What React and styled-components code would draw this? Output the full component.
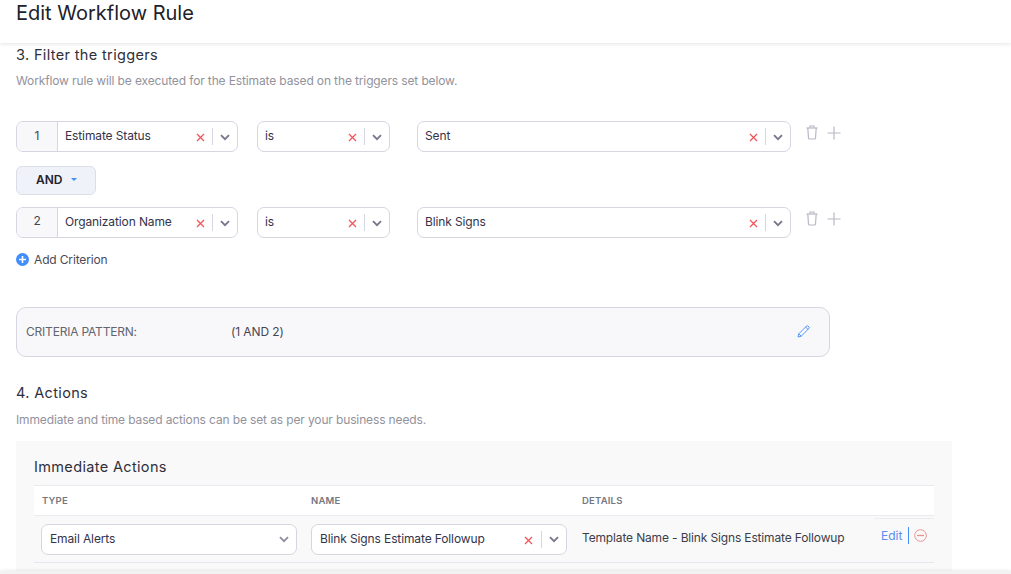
import React from 'react';
import styled, { createGlobalStyle } from 'styled-components';

const GlobalStyle = createGlobalStyle`
  html, body {
    margin: 0;
    padding: 0;
    background: #fff;
    overflow: hidden;
  }
  body {
    font-family: Inter, "Noto Sans", sans-serif;
    color: #22212e;
  }
`;

const Page = styled.div`
  position: relative;
  width: 1011px;
  height: 574px;
  overflow: hidden;
`;

const Header = styled.header`
  height: 43px;
  box-sizing: border-box;
  padding: 1px 16px 0;
  box-shadow: 0 1px 4px rgba(30, 30, 50, 0.12);
  font-size: 20px;
  line-height: 24px;
  color: #21212b;
`;

const Content = styled.main`
  padding: 0 16px;
`;

const SectionTitle = styled.h2`
  margin: 0;
  padding-top: ${({ $top }) => $top}px;
  font-size: 14.5px;
  line-height: 20px;
  font-weight: 400;
  letter-spacing: 0.35px;
  color: #2f2f3b;
`;

const SectionHint = styled.p`
  margin: ${({ $gap }) => $gap || 8}px 0 0;
  font-size: 12px;
  line-height: 16px;
  letter-spacing: -0.13px;
  color: #92929c;
`;

const CriteriaRow = styled.div`
  display: flex;
  align-items: flex-start;
  height: 31px;
  margin-top: ${({ $top }) => $top}px;
`;

const Select = styled.div`
  display: flex;
  align-items: center;
  box-sizing: border-box;
  flex: none;
  width: ${({ $width }) => $width}px;
  height: 31px;
  margin-left: ${({ $left }) => $left || 0}px;
  background: #fff;
  border: 1px solid #d6d5e2;
  border-radius: 7px;
  font-size: 12px;
  letter-spacing: -0.12px;
`;

const IndexCell = styled.span`
  flex: none;
  width: 41px;
  height: 100%;
  display: flex;
  align-items: center;
  justify-content: center;
  padding-bottom: ${({ $lift }) => $lift}px;
  box-sizing: border-box;
  background: #f8f8fb;
  border-right: 1px solid #d6d5e2;
  border-radius: 6px 0 0 6px;
  color: #45454f;
`;

const Value = styled.span`
  flex: 1;
  min-width: 0;
  padding-left: ${({ $pad }) => $pad || 7}px;
  padding-bottom: 2px;
  white-space: nowrap;
  color: #34334a;
`;

const Clear = styled.svg`
  flex: none;
  width: 9px;
  height: 9px;
  margin-top: 2px;
  margin-right: ${({ $right }) => $right || 7}px;
`;

const Divider = styled.span`
  flex: none;
  width: 1px;
  height: 17px;
  background: #d6d5e2;
`;

const Caret = styled.svg`
  flex: none;
  width: 10px;
  height: 7px;
  margin: 1px 7px 0 7px;
`;

const RowTools = styled.div`
  display: flex;
  align-items: center;
  gap: 9px;
  margin: 4px 0 0 15px;
`;

const AndButton = styled.button`
  display: flex;
  align-items: center;
  box-sizing: border-box;
  width: 80px;
  height: 29px;
  margin-top: 14px;
  padding: 0 0 2px 19px;
  background: #eff2f9;
  border: 1px solid #dcdde8;
  border-radius: 6px;
  font: 600 12px Inter, sans-serif;
  color: #22222e;
`;

const AndCaret = styled.span`
  width: 0;
  height: 0;
  margin-left: 8px;
  border-left: 3px solid transparent;
  border-right: 3px solid transparent;
  border-top: 3px solid #408dfb;
`;

const AddCriterion = styled.div`
  display: flex;
  align-items: center;
  gap: 5px;
  margin-top: 13px;
  height: 16px;
  font-size: 12px;
  letter-spacing: -0.15px;
  color: #4a4a56;
`;

const PatternBox = styled.div`
  display: flex;
  align-items: center;
  box-sizing: border-box;
  width: 814px;
  height: 50px;
  margin-top: 40px;
  padding: 0 19px 2px 9px;
  background: #f8f8fa;
  border: 1px solid #d6d5e2;
  border-radius: 10px;
  font-size: 12px;
  letter-spacing: -0.1px;
  color: #474753;
`;

const PatternLabel = styled.span`
  width: 205px;
  letter-spacing: -0.2px;
  color: #64646e;
`;

const PatternValue = styled.span`
  flex: 1;
`;

const ActionsPanel = styled.section`
  box-sizing: border-box;
  width: 936px;
  height: 140px;
  margin-top: 13px;
  padding: 17px 18px 0;
  background: #f9f9f9;
`;

const PanelTitle = styled.h3`
  margin: 0;
  font-size: 14.5px;
  line-height: 18px;
  font-weight: 400;
  letter-spacing: 0.35px;
  color: #2f2f3b;
`;

const TableHead = styled.div`
  display: grid;
  grid-template-columns: 277px 271px 1fr;
  align-items: center;
  box-sizing: border-box;
  height: 31px;
  margin-top: 9px;
  background: #fff;
  border-top: 1px solid #ebebf1;
  border-bottom: 1px solid #ebebf1;
  font-size: 9.5px;
  font-weight: 600;
  letter-spacing: 0.2px;
  color: #76767f;
`;

const HeadCell = styled.span`
  padding-left: ${({ $pad }) => $pad}px;
`;

const TableRow = styled.div`
  display: flex;
  align-items: center;
  box-sizing: border-box;
  height: 47px;
  border-bottom: 1px solid #e6e6f0;
  padding-left: 7px;
`;

const SelectSlot = styled.div`
  flex: none;
  width: ${({ $width }) => $width}px;
  letter-spacing: -0.17px;
`;

const Details = styled.span`
  flex: none;
  width: 299px;
  padding-bottom: 3px;
  font-size: 12px;
  letter-spacing: -0.15px;
  white-space: nowrap;
  color: #3d3d49;
`;

const RowActions = styled.div`
  position: relative;
  flex: 1;
  align-self: stretch;
  display: flex;
  align-items: center;
  padding: 0 0 8px 0;
  font-size: 12px;
  color: #5b8def;

  &::before {
    content: '';
    position: absolute;
    top: 2px;
    left: -7px;
    right: 0;
    height: 1px;
    background: #ebebf1;
  }
`;

const Pipe = styled.span`
  width: 1px;
  height: 17px;
  margin: 0 5px 0 6px;
  background: #408dfb;
`;

const FooterEdge = styled.div`
  position: absolute;
  left: 0;
  right: 0;
  bottom: 0;
  height: 3px;
  background: #f2f2f3;
  box-shadow: 0 -1px 3px rgba(30, 30, 50, 0.08);
`;

const ClearIcon = ({ right }) => (
  <Clear viewBox="0 0 9 9" $right={right}>
    <path d="M1 1l7 7M8 1L1 8" stroke="#f2545b" strokeWidth="1.3" fill="none" />
  </Clear>
);

const CaretIcon = ({ color = '#77768a' }) => (
  <Caret viewBox="0 0 10 7">
    <path d="M1 1.2l4 4 4-4" stroke={color} strokeWidth="1.8" fill="none" />
  </Caret>
);

const TrashIcon = () => (
  <svg width="12" height="15" viewBox="0 0 12 15" fill="none" stroke="#b9b8c6" strokeWidth="1.2">
    <path d="M.5 3h11" />
    <path d="M4 2.8V1h4v1.8" />
    <path d="M1.8 3l.7 10a1 1 0 0 0 1 1h5a1 1 0 0 0 1-1l.7-10" />
  </svg>
);

const PlusIcon = () => (
  <svg width="14" height="14" viewBox="0 0 14 14" stroke="#b9b8c6" strokeWidth="1.2">
    <path d="M7 0.5v13M.5 7h13" />
  </svg>
);

const AddIcon = () => (
  <svg width="13" height="13" viewBox="0 0 13 13">
    <circle cx="6.5" cy="6.5" r="6.5" fill="#408dfb" />
    <path d="M6.5 3v7M3 6.5h7" stroke="#fff" strokeWidth="1.6" />
  </svg>
);

const PencilIcon = () => (
  <svg width="13" height="13" viewBox="0 0 13 13" fill="none" stroke="#408dfb" strokeWidth="0.9">
    <path d="M1 12l.8-3.2L9.6 1a1 1 0 0 1 1.4 0l1 1a1 1 0 0 1 0 1.4L4.2 11.2z" />
    <path d="M1.8 8.8l2.4 2.4M8.6 2l2.4 2.4" />
  </svg>
);

const RemoveIcon = () => (
  <svg width="13" height="13" viewBox="0 0 13 13" fill="none" stroke="#ee8f8f" strokeWidth="1">
    <circle cx="6.5" cy="6.5" r="5.8" />
    <path d="M3 6.5h7" strokeWidth="1.3" />
  </svg>
);

const Criterion = ({ index, field, value, top, lift }) => (
  <CriteriaRow $top={top}>
    <Select $width={222}>
      <IndexCell $lift={lift}>{index}</IndexCell>
      <Value>{field}</Value>
      <ClearIcon />
      <Divider />
      <CaretIcon />
    </Select>
    <Select $width={133} $left={19}>
      <Value>is</Value>
      <ClearIcon />
      <Divider />
      <CaretIcon />
    </Select>
    <Select $width={374} $left={27}>
      <Value>{value}</Value>
      <ClearIcon />
      <Divider />
      <CaretIcon />
    </Select>
    <RowTools>
      <TrashIcon />
      <PlusIcon />
    </RowTools>
  </CriteriaRow>
);

const App = () => (
  <Page>
    <GlobalStyle />
    <Header>Edit Workflow Rule</Header>
    <Content>
      <SectionTitle $top={2}>3. Filter the triggers</SectionTitle>
      <SectionHint>Workflow rule will be executed for the Estimate based on the triggers set below.</SectionHint>
      <Criterion index="1" field="Estimate Status" value="Sent" top={32} lift={2} />
      <AndButton>
        AND
        <AndCaret />
      </AndButton>
      <Criterion index="2" field="Organization Name" value="Blink Signs" top={12} lift={4} />
      <AddCriterion>
        <AddIcon />
        Add Criterion
      </AddCriterion>
      <PatternBox>
        <PatternLabel>CRITERIA PATTERN:</PatternLabel>
        <PatternValue>(1 AND 2)</PatternValue>
        <PencilIcon />
      </PatternBox>
      <SectionTitle $top={26}>4. Actions</SectionTitle>
      <SectionHint $gap={9}>Immediate and time based actions can be set as per your business needs.</SectionHint>
      <ActionsPanel>
        <PanelTitle>Immediate Actions</PanelTitle>
        <TableHead>
          <HeadCell $pad={8}>TYPE</HeadCell>
          <HeadCell $pad={0}>NAME</HeadCell>
          <HeadCell $pad={0}>DETAILS</HeadCell>
        </TableHead>
        <TableRow>
          <SelectSlot $width={270}>
            <Select $width={256}>
              <Value $pad={8}>Email Alerts</Value>
              <CaretIcon color="#8f8e9e" />
            </Select>
          </SelectSlot>
          <SelectSlot $width={271}>
            <Select $width={256}>
              <Value $pad={8}>Blink Signs Estimate Followup</Value>
              <ClearIcon right={8} />
              <Divider />
              <CaretIcon />
            </Select>
          </SelectSlot>
          <Details>Template Name - Blink Signs Estimate Followup</Details>
          <RowActions>
            Edit
            <Pipe />
            <RemoveIcon />
          </RowActions>
        </TableRow>
      </ActionsPanel>
    </Content>
    <FooterEdge />
  </Page>
);

export default App;
